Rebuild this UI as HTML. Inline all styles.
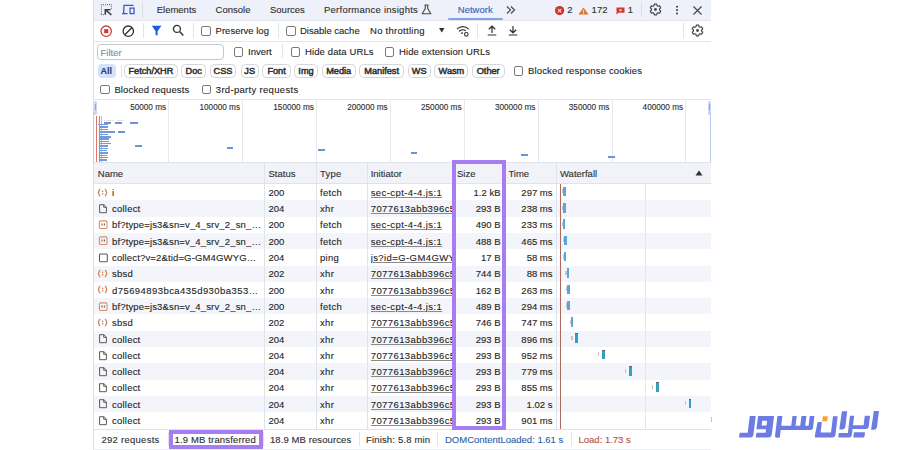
<!DOCTYPE html>
<html><head><meta charset="utf-8">
<style>
html,body{margin:0;padding:0;background:#fff;}
#c{position:relative;width:900px;height:450px;overflow:hidden;background:#fff;font-family:"Liberation Sans",sans-serif;}
.a{position:absolute;}
.t{position:absolute;font-family:"Liberation Sans",sans-serif;font-size:9.5px;line-height:12px;white-space:nowrap;color:#1f1f1f;-webkit-text-stroke:0.12px currentColor;}
.r{text-align:right;}
.u{text-decoration:underline;text-decoration-color:#8a8a8a;}
.clip{overflow:hidden;}
.row{position:absolute;left:94px;width:617px;}
.ic{position:absolute;width:11px;height:11px;}
.ic svg{display:block;}
.wfb{position:absolute;width:2.8px;height:9.5px;background:linear-gradient(90deg,#3fa88f 0,#2a9ccc 40%,#3b9fe0 100%);border-top:1px solid #4d6a78;box-sizing:border-box;}
.wfl{background:#55a7dc;border-top:none;width:2.4px;}
.wfq{position:absolute;width:1.3px;height:4.3px;background:#c4c4c4;}
.vl{position:absolute;width:1px;}
.hl{position:absolute;height:1px;}
.cb{position:absolute;width:7.5px;height:7.5px;border:1px solid #7a7a7a;border-radius:2px;background:#fff;}
.chip{position:absolute;height:12px;border:1px solid #d3d6db;border-radius:4.5px;background:#fff;}
.ct{font-weight:bold;font-size:9px;color:#303030;}
.chip{display:flex;align-items:center;justify-content:center;}
.ct2{font-family:"Liberation Sans";font-size:9.2px;font-weight:normal;-webkit-text-stroke:0.5px #303030;color:#303030;line-height:12px;white-space:nowrap;}
.ovl{font-size:8.2px;line-height:10px;color:#303030;text-align:right;}
</style></head><body><div id="c">

<!-- panel bg -->
<div class="a" style="left:93px;top:0;width:618px;height:450px;background:#fff;"></div>
<!-- tab bar -->
<div class="a" style="left:94px;top:0;width:617px;height:20px;background:#eef1f9;"></div>
<div class="hl" style="left:94px;top:19.6px;width:617px;background:#e2e5ec;"></div>
<!-- left border -->
<div class="vl" style="left:93px;top:0;height:450px;background:#dde1e8;"></div>

<!-- tab bar icons -->
<svg class="a" style="left:98px;top:2px" width="16" height="16" viewBox="0 0 16 16">
 <g fill="#555">
 <rect x="2.9" y="2.2" width="1" height="1"/><rect x="5" y="2.2" width="1" height="1"/><rect x="7" y="2.2" width="1" height="1"/><rect x="9" y="2.2" width="1" height="1"/><rect x="11" y="2.2" width="1" height="1"/><rect x="12.8" y="2.2" width="1" height="1"/>
 <rect x="12.8" y="4.2" width="1" height="1"/><rect x="12.8" y="6" width="0.9" height="0.9"/>
 <rect x="2.9" y="4.4" width="1" height="1"/><rect x="2.9" y="6.6" width="1" height="1"/><rect x="2.9" y="8.8" width="1" height="1"/><rect x="2.9" y="11" width="1" height="1"/><rect x="2.9" y="12.2" width="1" height="1"/>
 <rect x="5" y="12.2" width="1" height="1"/>
 </g>
 <path d="M7.3 12.8V7.8H12.5M7.5 8L13.4 12.9" fill="none" stroke="#3a3a3a" stroke-width="1.5"/>
</svg>
<svg class="a" style="left:121px;top:4px" width="14" height="11" viewBox="0 0 14 11">
 <path d="M2.5 1.3h10.1M3 1.3L2.6 9.6M1 9.6h5.6" fill="none" stroke="#3b5bc8" stroke-width="1.3"/>
 <rect x="9.1" y="4.1" width="3.9" height="5.5" fill="none" stroke="#3b5bc8" stroke-width="1.3"/>
</svg>
<div class="vl" style="left:142px;top:3px;height:14px;background:#d9dce3;"></div>
<div class="t" style="left:156.7px;top:4px;color:#303030">Elements</div>
<div class="t" style="left:215.6px;top:4px;color:#303030">Console</div>
<div class="t" style="left:270px;top:4px;color:#303030">Sources</div>
<div class="t" style="left:324px;top:4px;color:#303030;letter-spacing:0.24px">Performance insights</div>
<svg class="a" style="left:421px;top:4px" width="11" height="11" viewBox="0 0 11 11">
 <path d="M3.5 1h4M4.3 1v3.5L1.2 9.8h8.6L6.7 4.5V1" fill="none" stroke="#474747" stroke-width="1.1" stroke-linejoin="round"/>
</svg>
<div class="t" style="left:457.8px;top:4px;color:#3361b8">Network</div>
<div class="a" style="left:448px;top:18px;width:55px;height:2px;background:#7ea6e6;border-radius:1px"></div>
<svg class="a" style="left:506px;top:5px" width="10" height="10" viewBox="0 0 10 10">
 <path d="M1 1.5L4.5 5L1 8.5M5 1.5L8.5 5L5 8.5" fill="none" stroke="#474747" stroke-width="1.2"/>
</svg>
<!-- errors -->
<svg class="a" style="left:554px;top:6px" width="11" height="10" viewBox="0 0 11 10">
 <circle cx="5.6" cy="4.6" r="4.6" fill="#c9352c"/>
 <path d="M3.9 3L7.3 6.4M7.3 3L3.9 6.4" stroke="#f3d6d3" stroke-width="1.1"/>
</svg>
<div class="t" style="left:567.3px;top:4.3px;color:#303030">2</div>
<svg class="a" style="left:578.3px;top:7px" width="11" height="8" viewBox="0 0 11 8">
 <path d="M5.5 0.4L10.6 7.6H0.4z" fill="#e2762f"/>
 <path d="M5.5 2.8v2.6M5.5 6v0.9" stroke="#f7dcc8" stroke-width="1"/>
</svg>
<div class="t" style="left:591.6px;top:4.3px;color:#303030">172</div>
<svg class="a" style="left:615.5px;top:7px" width="9" height="9" viewBox="0 0 9 9">
 <path d="M0.5 0.6h8v5.2H2.4L0.5 7.8z" fill="#cf3a35"/>
 <rect x="3.4" y="2.2" width="2.2" height="2" fill="#f1d0cc"/>
</svg>
<div class="t" style="left:627.8px;top:4.3px;color:#303030">1</div>
<div class="vl" style="left:641px;top:3px;height:14px;background:#d9dce3;"></div>
<!-- gear -->
<svg class="a" style="left:648.8px;top:3.2px" width="13" height="13" viewBox="0 0 13 13">
 <path d="M11.73 8.20 L10.59 10.18 L9.02 9.73 L8.04 10.30 L7.64 11.88 L5.36 11.88 L4.96 10.30 L3.98 9.73 L2.41 10.18 L1.27 8.20 L2.44 7.07 L2.44 5.93 L1.27 4.80 L2.41 2.82 L3.98 3.27 L4.96 2.70 L5.36 1.12 L7.64 1.12 L8.04 2.70 L9.02 3.27 L10.59 2.82 L11.73 4.80 L10.56 5.93 L10.56 7.07Z" fill="none" stroke="#474747" stroke-width="1.2" stroke-linejoin="round"/>
 <circle cx="6.5" cy="6.5" r="1.4" fill="#474747"/>
</svg>
<svg class="a" style="left:674.8px;top:3.5px" width="4" height="12" viewBox="0 0 4 12">
 <circle cx="2" cy="2.7" r="1.05" fill="#474747"/><circle cx="2" cy="6.1" r="1.05" fill="#474747"/><circle cx="2" cy="9.5" r="1.05" fill="#474747"/>
</svg>
<svg class="a" style="left:692.5px;top:5.5px" width="9" height="9" viewBox="0 0 9 9">
 <path d="M0.5 0.5L8.5 8.5M8.5 0.5L0.5 8.5" stroke="#474747" stroke-width="1.2"/>
</svg>

<!-- toolbar row -->
<div class="hl" style="left:94px;top:41px;width:617px;background:#e3e6ed;"></div>
<svg class="a" style="left:100px;top:24.5px" width="13" height="13" viewBox="0 0 13 13">
 <circle cx="6.2" cy="6.2" r="5.2" fill="none" stroke="#c5453a" stroke-width="1.3"/>
 <rect x="4.2" y="4.2" width="4" height="4" fill="#d93025"/>
</svg>
<svg class="a" style="left:121.5px;top:24.5px" width="13" height="13" viewBox="0 0 13 13">
 <circle cx="6.3" cy="6.2" r="5.2" fill="none" stroke="#303030" stroke-width="1.3"/>
 <path d="M2.8 9.7L9.8 2.7" stroke="#303030" stroke-width="1.3"/>
</svg>
<div class="vl" style="left:142.5px;top:23px;height:15px;background:#e1e3e8;"></div>
<svg class="a" style="left:151px;top:25px" width="11" height="11" viewBox="0 0 11 11">
 <path d="M0.8 0.8h9.6L6.6 6.2V10.3H4.6V6.2z" fill="#1a5ce6"/>
</svg>
<svg class="a" style="left:172px;top:24px" width="13" height="13" viewBox="0 0 13 13">
 <circle cx="4.9" cy="4.9" r="3.5" fill="none" stroke="#303030" stroke-width="1.3"/>
 <path d="M7.5 7.5L11.4 11.5" stroke="#303030" stroke-width="1.4"/>
</svg>
<div class="vl" style="left:193px;top:23px;height:15px;background:#e1e3e8;"></div>
<div class="cb" style="left:201px;top:26.2px"></div>
<div class="t" style="left:215.6px;top:25.2px">Preserve log</div>
<div class="vl" style="left:277.8px;top:23px;height:15px;background:#e1e3e8;"></div>
<div class="cb" style="left:286px;top:26.2px"></div>
<div class="t" style="left:300px;top:25.2px">Disable cache</div>
<div class="t" style="left:370px;top:25.2px;letter-spacing:0.28px">No throttling</div>
<svg class="a" style="left:438.5px;top:28px" width="6" height="5" viewBox="0 0 6 5"><path d="M0 0h5.5L2.75 4.5z" fill="#303030"/></svg>
<svg class="a" style="left:456px;top:24.5px" width="14" height="12" viewBox="0 0 14 12">
 <path d="M1 4.2A8 8 0 0 1 12.6 4.2M3 6.4A5 5 0 0 1 9.8 5.8M5.2 8.6A2 2 0 0 1 7 8" fill="none" stroke="#303030" stroke-width="1.2"/>
 <circle cx="10.3" cy="9.3" r="1.8" fill="none" stroke="#303030" stroke-width="1.1"/>
</svg>
<div class="vl" style="left:476.7px;top:23px;height:15px;background:#e1e3e8;"></div>
<svg class="a" style="left:486.5px;top:25px" width="10" height="11" viewBox="0 0 10 11">
 <path d="M5 8V1.2M1.8 4.3L5 1.2L8.2 4.3M0.7 10h8.6" fill="none" stroke="#303030" stroke-width="1.2"/>
</svg>
<svg class="a" style="left:507.5px;top:25px" width="10" height="11" viewBox="0 0 10 11">
 <path d="M5 1v6.8M1.8 4.7L5 7.8L8.2 4.7M0.7 10h8.6" fill="none" stroke="#303030" stroke-width="1.2"/>
</svg>
<div class="vl" style="left:683px;top:23px;height:15px;background:#e1e3e8;"></div>
<svg class="a" style="left:690.8px;top:24.2px" width="13" height="13" viewBox="0 0 13 13">
 <path d="M11.73 8.20 L10.59 10.18 L9.02 9.73 L8.04 10.30 L7.64 11.88 L5.36 11.88 L4.96 10.30 L3.98 9.73 L2.41 10.18 L1.27 8.20 L2.44 7.07 L2.44 5.93 L1.27 4.80 L2.41 2.82 L3.98 3.27 L4.96 2.70 L5.36 1.12 L7.64 1.12 L8.04 2.70 L9.02 3.27 L10.59 2.82 L11.73 4.80 L10.56 5.93 L10.56 7.07Z" fill="none" stroke="#474747" stroke-width="1.2" stroke-linejoin="round"/>
 <circle cx="6.5" cy="6.5" r="1.4" fill="#474747"/>
</svg>
<!-- filter row -->
<div class="a" style="left:97px;top:44px;width:124.5px;height:13.5px;border:1px solid #c4c7cc;border-radius:4px;"></div>
<div class="t" style="left:100.5px;top:46.9px;color:#8a8a8a">Filter</div>
<div class="cb" style="left:233.5px;top:47px"></div>
<div class="t" style="left:248px;top:46.1px">Invert</div>
<div class="vl" style="left:281.5px;top:44px;height:14px;background:#e1e3e8;"></div>
<div class="cb" style="left:290.5px;top:47px"></div>
<div class="t" style="left:305px;top:46.1px;letter-spacing:0.12px">Hide data URLs</div>
<div class="cb" style="left:384.5px;top:47px"></div>
<div class="t" style="left:399px;top:46.1px;letter-spacing:0.1px">Hide extension URLs</div>

<!-- chips -->
<div class="a" style="left:97.6px;top:64.4px;width:18.6px;height:13.4px;background:#d3e3fd;border-radius:4px"></div>
<div class="t ct" style="left:100.5px;top:65.3px;color:#1f3f7a">All</div>
<div class="vl" style="left:120.5px;top:65px;height:12px;background:#e1e3e8;"></div>
<div class="chip" style="left:124.2px;top:64.4px;width:51.4px;"><span class="ct2">Fetch/XHR</span></div>
<div class="chip" style="left:181.1px;top:64.4px;width:23.3px;"><span class="ct2">Doc</span></div>
<div class="chip" style="left:209.9px;top:64.4px;width:24.3px;"><span class="ct2">CSS</span></div>
<div class="chip" style="left:240.5px;top:64.4px;width:16.4px;"><span class="ct2">JS</span></div>
<div class="chip" style="left:262.2px;top:64.4px;width:26.8px;"><span class="ct2">Font</span></div>
<div class="chip" style="left:293.8px;top:64.4px;width:22.4px;"><span class="ct2">Img</span></div>
<div class="chip" style="left:321.8px;top:64.4px;width:31.8px;"><span class="ct2">Media</span></div>
<div class="chip" style="left:359.3px;top:64.4px;width:42.7px;"><span class="ct2">Manifest</span></div>
<div class="chip" style="left:407.8px;top:64.4px;width:20.9px;"><span class="ct2">WS</span></div>
<div class="chip" style="left:434.4px;top:64.4px;width:32.0px;"><span class="ct2">Wasm</span></div>
<div class="chip" style="left:471.6px;top:64.4px;width:31.2px;"><span class="ct2">Other</span></div>
<div class="cb" style="left:513.5px;top:66px"></div>
<div class="t" style="left:528px;top:65.3px;letter-spacing:0.16px">Blocked response cookies</div>

<div class="cb" style="left:100px;top:84.9px"></div>
<div class="t" style="left:114.4px;top:83.9px;letter-spacing:0.13px">Blocked requests</div>
<div class="cb" style="left:201.5px;top:84.9px"></div>
<div class="t" style="left:215.8px;top:83.9px;letter-spacing:0.31px">3rd-party requests</div>

<!-- overview -->
<div class="hl" style="left:94px;top:99px;width:617px;background:#e3e6ed;"></div>
<div class="vl" style="left:168.3px;top:100px;height:62px;background:#e6e9f0;"></div>
<div class="t ovl" style="right:733.9px;top:103.3px">50000 ms</div>
<div class="vl" style="left:242.2px;top:100px;height:62px;background:#e6e9f0;"></div>
<div class="t ovl" style="right:660.0px;top:103.3px">100000 ms</div>
<div class="vl" style="left:316.0px;top:100px;height:62px;background:#e6e9f0;"></div>
<div class="t ovl" style="right:586.2px;top:103.3px">150000 ms</div>
<div class="vl" style="left:389.9px;top:100px;height:62px;background:#e6e9f0;"></div>
<div class="t ovl" style="right:512.3px;top:103.3px">200000 ms</div>
<div class="vl" style="left:463.7px;top:100px;height:62px;background:#e6e9f0;"></div>
<div class="t ovl" style="right:438.5px;top:103.3px">250000 ms</div>
<div class="vl" style="left:537.6px;top:100px;height:62px;background:#e6e9f0;"></div>
<div class="t ovl" style="right:364.6px;top:103.3px">300000 ms</div>
<div class="vl" style="left:611.5px;top:100px;height:62px;background:#e6e9f0;"></div>
<div class="t ovl" style="right:290.7px;top:103.3px">350000 ms</div>
<div class="vl" style="left:685.3px;top:100px;height:62px;background:#e6e9f0;"></div>
<div class="t ovl" style="right:216.9px;top:103.3px">400000 ms</div>
<div class="a" style="left:93.5px;top:100.5px;width:3.2px;height:14px;background:#c9d7f2;border-radius:1.5px"></div>
<div class="a" style="left:707.6px;top:100.5px;width:3.2px;height:14px;background:#c9d7f2;border-radius:1.5px"></div>
<div class="a" style="left:94.5px;top:104px;width:1px;height:6px;background:#8ea6d8"></div>
<div class="a" style="left:708.8px;top:104px;width:1px;height:6px;background:#8ea6d8"></div>
<div class="a" style="left:93px;top:112px;width:1px;height:50.5px;background:#b9cbee"></div>
<div class="a" style="left:710px;top:112px;width:1px;height:50.5px;background:#b9cbee"></div>
<div class="a" style="left:96px;top:115.5px;width:1px;height:46.5px;background:#d9786b"></div>
<div class="a" style="left:99px;top:115.5px;width:1px;height:46.5px;background:#d9786b"></div>
<div class="a" style="left:100.8px;top:115.5px;width:1px;height:46.5px;background:#e9b0a4"></div>
<div class="a" style="left:130.0px;top:122px;width:7.8px;height:2px;background:#6b92da"></div>
<div class="a" style="left:114.6px;top:122px;width:7.4px;height:2px;background:#6b92da"></div>
<div class="a" style="left:103.6px;top:122px;width:7.4px;height:2px;background:#6b92da"></div>
<div class="a" style="left:117.8px;top:131px;width:7.1px;height:2px;background:#6b92da"></div>
<div class="a" style="left:135.1px;top:145px;width:7.1px;height:2px;background:#6b92da"></div>
<div class="a" style="left:226.7px;top:147px;width:6.8px;height:2px;background:#6b92da"></div>
<div class="a" style="left:318.0px;top:149px;width:7.0px;height:2px;background:#6b92da"></div>
<div class="a" style="left:410.5px;top:152px;width:6.7px;height:2px;background:#6b92da"></div>
<div class="a" style="left:520.8px;top:154px;width:7.5px;height:2px;background:#6b92da"></div>
<div class="a" style="left:608.3px;top:156px;width:7.0px;height:2px;background:#6b92da"></div>
<div class="a" style="left:104px;top:119.5px;width:10px;height:1px;background:#efe6da"></div>
<div class="a" style="left:117px;top:119.5px;width:7px;height:1px;background:#efe6da"></div>
<div class="a" style="left:98.0px;top:123.9px;width:10.0px;height:1.6px;background:#7599dc"></div>
<div class="a" style="left:99.0px;top:126.2px;width:9.0px;height:1.6px;background:#7599dc"></div>
<div class="a" style="left:99.0px;top:128.7px;width:9.0px;height:1.6px;background:#7599dc"></div>
<div class="a" style="left:100.0px;top:131.4px;width:15.0px;height:1.6px;background:#7599dc"></div>
<div class="a" style="left:100.0px;top:133.7px;width:8.0px;height:1.6px;background:#7599dc"></div>
<div class="a" style="left:100.0px;top:136.0px;width:11.0px;height:1.6px;background:#7599dc"></div>
<div class="a" style="left:100.0px;top:138.2px;width:9.0px;height:1.6px;background:#7599dc"></div>
<div class="a" style="left:100.0px;top:140.5px;width:9.0px;height:1.6px;background:#7599dc"></div>
<div class="a" style="left:100.0px;top:142.8px;width:11.0px;height:1.6px;background:#7599dc"></div>
<div class="a" style="left:100.0px;top:145.2px;width:8.0px;height:1.6px;background:#7599dc"></div>
<div class="a" style="left:100.0px;top:147.5px;width:8.0px;height:1.6px;background:#7599dc"></div>
<div class="a" style="left:100.0px;top:149.8px;width:7.0px;height:1.6px;background:#7599dc"></div>
<div class="a" style="left:100.0px;top:152.2px;width:8.0px;height:1.6px;background:#7599dc"></div>
<div class="a" style="left:100.0px;top:154.5px;width:7.0px;height:1.6px;background:#7599dc"></div>
<div class="a" style="left:100.0px;top:156.8px;width:8.0px;height:1.6px;background:#7599dc"></div>
<div class="a" style="left:100.0px;top:159.2px;width:7.0px;height:1.6px;background:#7599dc"></div>


<!-- table header -->
<div class="a" style="left:94px;top:162px;width:617px;height:22px;background:#f1f3f9;"></div>
<div class="hl" style="left:94px;top:162px;width:617px;background:#e0e4ee;"></div>
<div class="hl" style="left:94px;top:183px;width:617px;background:#dde3ef;"></div>

<div class="row" style="top:184.00px;height:16.3px;background:#ffffff"></div>
<div class="row" style="top:200.30px;height:16.3px;background:#f3f5fa"></div>
<div class="row" style="top:216.60px;height:16.3px;background:#ffffff"></div>
<div class="row" style="top:232.90px;height:16.3px;background:#f3f5fa"></div>
<div class="row" style="top:249.20px;height:16.3px;background:#ffffff"></div>
<div class="row" style="top:265.50px;height:16.3px;background:#f3f5fa"></div>
<div class="row" style="top:281.80px;height:16.3px;background:#ffffff"></div>
<div class="row" style="top:298.10px;height:16.3px;background:#f3f5fa"></div>
<div class="row" style="top:314.40px;height:16.3px;background:#ffffff"></div>
<div class="row" style="top:330.70px;height:16.3px;background:#f3f5fa"></div>
<div class="row" style="top:347.00px;height:16.3px;background:#ffffff"></div>
<div class="row" style="top:363.30px;height:16.3px;background:#f3f5fa"></div>
<div class="row" style="top:379.60px;height:16.3px;background:#ffffff"></div>
<div class="row" style="top:395.90px;height:16.3px;background:#f3f5fa"></div>
<div class="row" style="top:412.20px;height:16.3px;background:#ffffff"></div>
<div class="ic" style="left:97px;top:186.50px"><svg width="11" height="11" viewBox="0 0 11 11"><path d="M3.4 2Q2.2 2.3 2.1 3.8L1.4 5.5L2.1 7.2Q2.2 8.7 3.4 9M7.8 2Q9 2.3 9.1 3.8L9.8 5.5L9.1 7.2Q9 8.7 7.8 9" fill="none" stroke="#d08453" stroke-width="1.25" stroke-linejoin="round"/><circle cx="5.6" cy="4.2" r="0.75" fill="#b4764f"/><circle cx="5.6" cy="6.8" r="0.75" fill="#b4764f"/></svg></div>
<div class="t " style="left:112px;top:186.81px;letter-spacing:0px">i</div>
<div class="t " style="left:268.5px;top:186.81px;">200</div>
<div class="t " style="left:320px;top:186.81px;letter-spacing:0.3px">fetch</div>
<div class="t u clip" style="left:370.7px;top:186.81px;width:82px;letter-spacing:0.41px">sec-cpt-4-4.js:1</div>
<div class="t r " style="right:399.5px;top:186.81px;">1.2 kB</div>
<div class="t r " style="right:347.5px;top:186.81px;">297 ms</div>
<div class="wfb wfl" style="left:563.20px;top:186.70px"></div>
<div class="wfq" style="left:562.00px;top:189.20px"></div>
<div class="ic" style="left:97px;top:202.80px"><svg width="11" height="11" viewBox="0 0 11 11"><path d="M2.6 1.7h4.3L9.4 4.1V9.7H2.6z M6.7 1.7v2.6H9.4" fill="none" stroke="#5a5a5a" stroke-width="1" stroke-linejoin="round"/></svg></div>
<div class="t " style="left:112px;top:203.11px;letter-spacing:0.22px">collect</div>
<div class="t " style="left:268.5px;top:203.11px;">204</div>
<div class="t " style="left:320px;top:203.11px;letter-spacing:0.3px">xhr</div>
<div class="t u clip" style="left:370.7px;top:203.11px;width:82px;letter-spacing:0.41px">7077613abb396c5</div>
<div class="t r " style="right:399.5px;top:203.11px;">293 B</div>
<div class="t r " style="right:347.5px;top:203.11px;">238 ms</div>
<div class="wfb wfl" style="left:563.20px;top:203.00px"></div>
<div class="wfq" style="left:562.00px;top:205.50px"></div>
<div class="ic" style="left:97px;top:219.10px"><svg width="11" height="11" viewBox="0 0 11 11"><rect x="2.4" y="1.9" width="7.6" height="7.6" rx="1.3" fill="none" stroke="#d8906a" stroke-width="1.1"/><path d="M5 4.6v1.8M7.4 4.6v1.8" stroke="#7d5a48" stroke-width="1.1"/></svg></div>
<div class="t " style="left:112px;top:219.41px;letter-spacing:0.15px">bf?type=js3&amp;sn=v_4_srv_2_sn_…</div>
<div class="t " style="left:268.5px;top:219.41px;">200</div>
<div class="t " style="left:320px;top:219.41px;letter-spacing:0.3px">fetch</div>
<div class="t u clip" style="left:370.7px;top:219.41px;width:82px;letter-spacing:0.41px">sec-cpt-4-4.js:1</div>
<div class="t r " style="right:399.5px;top:219.41px;">490 B</div>
<div class="t r " style="right:347.5px;top:219.41px;">233 ms</div>
<div class="wfb wfl" style="left:562.90px;top:219.30px"></div>
<div class="wfq" style="left:561.70px;top:221.80px"></div>
<div class="ic" style="left:97px;top:235.40px"><svg width="11" height="11" viewBox="0 0 11 11"><rect x="2.4" y="1.9" width="7.6" height="7.6" rx="1.3" fill="none" stroke="#d8906a" stroke-width="1.1"/><path d="M5 4.6v1.8M7.4 4.6v1.8" stroke="#7d5a48" stroke-width="1.1"/></svg></div>
<div class="t " style="left:112px;top:235.71px;letter-spacing:0.15px">bf?type=js3&amp;sn=v_4_srv_2_sn_…</div>
<div class="t " style="left:268.5px;top:235.71px;">200</div>
<div class="t " style="left:320px;top:235.71px;letter-spacing:0.3px">fetch</div>
<div class="t u clip" style="left:370.7px;top:235.71px;width:82px;letter-spacing:0.41px">sec-cpt-4-4.js:1</div>
<div class="t r " style="right:399.5px;top:235.71px;">488 B</div>
<div class="t r " style="right:347.5px;top:235.71px;">465 ms</div>
<div class="wfb wfl" style="left:564.20px;top:235.60px"></div>
<div class="wfq" style="left:563.00px;top:238.10px"></div>
<div class="ic" style="left:97px;top:251.70px"><svg width="11" height="11" viewBox="0 0 11 11"><rect x="2.5" y="1.9" width="7.8" height="7.8" rx="1" fill="none" stroke="#5a5a5a" stroke-width="1.05"/></svg></div>
<div class="t " style="left:112px;top:252.01px;letter-spacing:0.15px">collect?v=2&amp;tid=G-GM4GWYG…</div>
<div class="t " style="left:268.5px;top:252.01px;">204</div>
<div class="t " style="left:320px;top:252.01px;letter-spacing:0.3px">ping</div>
<div class="t u clip" style="left:370.7px;top:252.01px;width:82px;letter-spacing:0.41px">js?id=G-GM4GWYG</div>
<div class="t r " style="right:399.5px;top:252.01px;">17 B</div>
<div class="t r " style="right:347.5px;top:252.01px;">58 ms</div>
<div class="wfb wfl" style="left:563.90px;top:251.90px"></div>
<div class="wfq" style="left:562.70px;top:254.40px"></div>
<div class="ic" style="left:97px;top:268.00px"><svg width="11" height="11" viewBox="0 0 11 11"><path d="M3.4 2Q2.2 2.3 2.1 3.8L1.4 5.5L2.1 7.2Q2.2 8.7 3.4 9M7.8 2Q9 2.3 9.1 3.8L9.8 5.5L9.1 7.2Q9 8.7 7.8 9" fill="none" stroke="#d08453" stroke-width="1.25" stroke-linejoin="round"/><circle cx="5.6" cy="4.2" r="0.75" fill="#b4764f"/><circle cx="5.6" cy="6.8" r="0.75" fill="#b4764f"/></svg></div>
<div class="t " style="left:112px;top:268.31px;letter-spacing:0.2px">sbsd</div>
<div class="t " style="left:268.5px;top:268.31px;">202</div>
<div class="t " style="left:320px;top:268.31px;letter-spacing:0.3px">xhr</div>
<div class="t u clip" style="left:370.7px;top:268.31px;width:82px;letter-spacing:0.41px">7077613abb396c5</div>
<div class="t r " style="right:399.5px;top:268.31px;">744 B</div>
<div class="t r " style="right:347.5px;top:268.31px;">88 ms</div>
<div class="wfb wfl" style="left:566.60px;top:268.20px"></div>
<div class="wfq" style="left:565.40px;top:270.70px"></div>
<div class="ic" style="left:97px;top:284.30px"><svg width="11" height="11" viewBox="0 0 11 11"><path d="M3.4 2Q2.2 2.3 2.1 3.8L1.4 5.5L2.1 7.2Q2.2 8.7 3.4 9M7.8 2Q9 2.3 9.1 3.8L9.8 5.5L9.1 7.2Q9 8.7 7.8 9" fill="none" stroke="#d08453" stroke-width="1.25" stroke-linejoin="round"/><circle cx="5.6" cy="4.2" r="0.75" fill="#b4764f"/><circle cx="5.6" cy="6.8" r="0.75" fill="#b4764f"/></svg></div>
<div class="t " style="left:112px;top:284.61px;letter-spacing:0.43px">d75694893bca435d930ba353…</div>
<div class="t " style="left:268.5px;top:284.61px;">200</div>
<div class="t " style="left:320px;top:284.61px;letter-spacing:0.3px">xhr</div>
<div class="t u clip" style="left:370.7px;top:284.61px;width:82px;letter-spacing:0.41px">7077613abb396c5</div>
<div class="t r " style="right:399.5px;top:284.61px;">162 B</div>
<div class="t r " style="right:347.5px;top:284.61px;">263 ms</div>
<div class="wfb wfl" style="left:567.30px;top:284.50px"></div>
<div class="wfq" style="left:566.10px;top:287.00px"></div>
<div class="ic" style="left:97px;top:300.60px"><svg width="11" height="11" viewBox="0 0 11 11"><rect x="2.4" y="1.9" width="7.6" height="7.6" rx="1.3" fill="none" stroke="#d8906a" stroke-width="1.1"/><path d="M5 4.6v1.8M7.4 4.6v1.8" stroke="#7d5a48" stroke-width="1.1"/></svg></div>
<div class="t " style="left:112px;top:300.91px;letter-spacing:0.15px">bf?type=js3&amp;sn=v_4_srv_2_sn_…</div>
<div class="t " style="left:268.5px;top:300.91px;">200</div>
<div class="t " style="left:320px;top:300.91px;letter-spacing:0.3px">fetch</div>
<div class="t u clip" style="left:370.7px;top:300.91px;width:82px;letter-spacing:0.41px">sec-cpt-4-4.js:1</div>
<div class="t r " style="right:399.5px;top:300.91px;">489 B</div>
<div class="t r " style="right:347.5px;top:300.91px;">294 ms</div>
<div class="wfb wfl" style="left:567.30px;top:300.80px"></div>
<div class="wfq" style="left:566.10px;top:303.30px"></div>
<div class="ic" style="left:97px;top:316.90px"><svg width="11" height="11" viewBox="0 0 11 11"><path d="M3.4 2Q2.2 2.3 2.1 3.8L1.4 5.5L2.1 7.2Q2.2 8.7 3.4 9M7.8 2Q9 2.3 9.1 3.8L9.8 5.5L9.1 7.2Q9 8.7 7.8 9" fill="none" stroke="#d08453" stroke-width="1.25" stroke-linejoin="round"/><circle cx="5.6" cy="4.2" r="0.75" fill="#b4764f"/><circle cx="5.6" cy="6.8" r="0.75" fill="#b4764f"/></svg></div>
<div class="t " style="left:112px;top:317.21px;letter-spacing:0.2px">sbsd</div>
<div class="t " style="left:268.5px;top:317.21px;">202</div>
<div class="t " style="left:320px;top:317.21px;letter-spacing:0.3px">xhr</div>
<div class="t u clip" style="left:370.7px;top:317.21px;width:82px;letter-spacing:0.41px">7077613abb396c5</div>
<div class="t r " style="right:399.5px;top:317.21px;">746 B</div>
<div class="t r " style="right:347.5px;top:317.21px;">747 ms</div>
<div class="wfb wfl" style="left:571.00px;top:317.10px"></div>
<div class="wfq" style="left:569.80px;top:319.60px"></div>
<div class="ic" style="left:97px;top:333.20px"><svg width="11" height="11" viewBox="0 0 11 11"><path d="M2.6 1.7h4.3L9.4 4.1V9.7H2.6z M6.7 1.7v2.6H9.4" fill="none" stroke="#5a5a5a" stroke-width="1" stroke-linejoin="round"/></svg></div>
<div class="t " style="left:112px;top:333.51px;letter-spacing:0.22px">collect</div>
<div class="t " style="left:268.5px;top:333.51px;">204</div>
<div class="t " style="left:320px;top:333.51px;letter-spacing:0.3px">xhr</div>
<div class="t u clip" style="left:370.7px;top:333.51px;width:82px;letter-spacing:0.41px">7077613abb396c5</div>
<div class="t r " style="right:399.5px;top:333.51px;">293 B</div>
<div class="t r " style="right:347.5px;top:333.51px;">896 ms</div>
<div class="wfb" style="left:575.40px;top:333.40px"></div>
<div class="wfq" style="left:571.40px;top:335.90px"></div>
<div class="ic" style="left:97px;top:349.50px"><svg width="11" height="11" viewBox="0 0 11 11"><path d="M2.6 1.7h4.3L9.4 4.1V9.7H2.6z M6.7 1.7v2.6H9.4" fill="none" stroke="#5a5a5a" stroke-width="1" stroke-linejoin="round"/></svg></div>
<div class="t " style="left:112px;top:349.81px;letter-spacing:0.22px">collect</div>
<div class="t " style="left:268.5px;top:349.81px;">204</div>
<div class="t " style="left:320px;top:349.81px;letter-spacing:0.3px">xhr</div>
<div class="t u clip" style="left:370.7px;top:349.81px;width:82px;letter-spacing:0.41px">7077613abb396c5</div>
<div class="t r " style="right:399.5px;top:349.81px;">293 B</div>
<div class="t r " style="right:347.5px;top:349.81px;">952 ms</div>
<div class="wfb" style="left:602.20px;top:349.70px"></div>
<div class="wfq" style="left:598.20px;top:352.20px"></div>
<div class="ic" style="left:97px;top:365.80px"><svg width="11" height="11" viewBox="0 0 11 11"><path d="M2.6 1.7h4.3L9.4 4.1V9.7H2.6z M6.7 1.7v2.6H9.4" fill="none" stroke="#5a5a5a" stroke-width="1" stroke-linejoin="round"/></svg></div>
<div class="t " style="left:112px;top:366.11px;letter-spacing:0.22px">collect</div>
<div class="t " style="left:268.5px;top:366.11px;">204</div>
<div class="t " style="left:320px;top:366.11px;letter-spacing:0.3px">xhr</div>
<div class="t u clip" style="left:370.7px;top:366.11px;width:82px;letter-spacing:0.41px">7077613abb396c5</div>
<div class="t r " style="right:399.5px;top:366.11px;">293 B</div>
<div class="t r " style="right:347.5px;top:366.11px;">779 ms</div>
<div class="wfb" style="left:629.00px;top:366.00px"></div>
<div class="wfq" style="left:625.00px;top:368.50px"></div>
<div class="ic" style="left:97px;top:382.10px"><svg width="11" height="11" viewBox="0 0 11 11"><path d="M2.6 1.7h4.3L9.4 4.1V9.7H2.6z M6.7 1.7v2.6H9.4" fill="none" stroke="#5a5a5a" stroke-width="1" stroke-linejoin="round"/></svg></div>
<div class="t " style="left:112px;top:382.41px;letter-spacing:0.22px">collect</div>
<div class="t " style="left:268.5px;top:382.41px;">204</div>
<div class="t " style="left:320px;top:382.41px;letter-spacing:0.3px">xhr</div>
<div class="t u clip" style="left:370.7px;top:382.41px;width:82px;letter-spacing:0.41px">7077613abb396c5</div>
<div class="t r " style="right:399.5px;top:382.41px;">293 B</div>
<div class="t r " style="right:347.5px;top:382.41px;">855 ms</div>
<div class="wfb" style="left:655.80px;top:382.30px"></div>
<div class="wfq" style="left:651.80px;top:384.80px"></div>
<div class="ic" style="left:97px;top:398.40px"><svg width="11" height="11" viewBox="0 0 11 11"><path d="M2.6 1.7h4.3L9.4 4.1V9.7H2.6z M6.7 1.7v2.6H9.4" fill="none" stroke="#5a5a5a" stroke-width="1" stroke-linejoin="round"/></svg></div>
<div class="t " style="left:112px;top:398.71px;letter-spacing:0.22px">collect</div>
<div class="t " style="left:268.5px;top:398.71px;">204</div>
<div class="t " style="left:320px;top:398.71px;letter-spacing:0.3px">xhr</div>
<div class="t u clip" style="left:370.7px;top:398.71px;width:82px;letter-spacing:0.41px">7077613abb396c5</div>
<div class="t r " style="right:399.5px;top:398.71px;">293 B</div>
<div class="t r " style="right:347.5px;top:398.71px;">1.02 s</div>
<div class="wfb" style="left:688.50px;top:398.60px"></div>
<div class="wfq" style="left:684.50px;top:401.10px"></div>
<div class="ic" style="left:97px;top:414.70px"><svg width="11" height="11" viewBox="0 0 11 11"><path d="M2.6 1.7h4.3L9.4 4.1V9.7H2.6z M6.7 1.7v2.6H9.4" fill="none" stroke="#5a5a5a" stroke-width="1" stroke-linejoin="round"/></svg></div>
<div class="t " style="left:112px;top:415.01px;letter-spacing:0.22px">collect</div>
<div class="t " style="left:268.5px;top:415.01px;">204</div>
<div class="t " style="left:320px;top:415.01px;letter-spacing:0.3px">xhr</div>
<div class="t u clip" style="left:370.7px;top:415.01px;width:82px;letter-spacing:0.41px">7077613abb396c5</div>
<div class="t r " style="right:399.5px;top:415.01px;">293 B</div>
<div class="t r " style="right:347.5px;top:415.01px;">901 ms</div>
<div class="wfq" style="left:710.80px;top:417.40px"></div>

<!-- column lines -->
<div class="vl" style="left:264px;top:162px;height:267px;background:#e0e3ea;"></div>
<div class="vl" style="left:316px;top:162px;height:267px;background:#e0e3ea;"></div>
<div class="vl" style="left:367px;top:162px;height:267px;background:#e0e3ea;"></div>
<div class="vl" style="left:453px;top:162px;height:267px;background:#e0e3ea;"></div>
<div class="vl" style="left:503px;top:162px;height:267px;background:#e0e3ea;"></div>
<div class="vl" style="left:555.5px;top:162px;height:267px;background:#e0e3ea;"></div>
<div class="vl" style="left:645px;top:184px;height:245px;background:#e3e6ee;"></div>
<div class="vl" style="left:560px;top:184px;height:245px;background:#ab6a5e;"></div>

<div class="t" style="left:97.8px;top:167.8px;color:#303030">Name</div>
<div class="t" style="left:268.5px;top:167.8px;color:#303030">Status</div>
<div class="t" style="left:320px;top:167.8px;color:#303030;letter-spacing:0.25px">Type</div>
<div class="t" style="left:370.7px;top:167.8px;color:#303030">Initiator</div>
<div class="t" style="left:457px;top:167.8px;color:#303030">Size</div>
<div class="t" style="left:508.4px;top:167.8px;color:#303030">Time</div>
<div class="t" style="left:560px;top:167.8px;color:#303030">Waterfall</div>
<svg class="a" style="left:695px;top:170px" width="8" height="6" viewBox="0 0 8 6"><path d="M0.5 5.5L4 0.5L7.5 5.5z" fill="#303030"/></svg>

<!-- status bar -->
<div class="a" style="left:94px;top:429px;width:617px;height:21px;background:#fff;"></div>
<div class="hl" style="left:94px;top:428.5px;width:617px;background:#dfe3ec;"></div>
<div class="hl" style="left:94px;top:449px;width:617px;background:#eef0f4;"></div>
<div class="t" style="left:101.5px;top:434px;color:#303030;letter-spacing:0.26px">292 requests</div>
<div class="vl" style="left:168px;top:432px;height:14px;background:#e1e3e8;"></div>
<div class="t" style="left:174.5px;top:434px;color:#303030;letter-spacing:0.15px">1.9 MB transferred</div>
<div class="vl" style="left:263px;top:432px;height:14px;background:#e1e3e8;"></div>
<div class="t" style="left:270px;top:434px;color:#303030;letter-spacing:0.09px">18.9 MB resources</div>
<div class="vl" style="left:359px;top:432px;height:14px;background:#e1e3e8;"></div>
<div class="t" style="left:366px;top:434px;color:#303030;letter-spacing:0.16px">Finish: 5.8 min</div>
<div class="vl" style="left:436.7px;top:432px;height:14px;background:#e1e3e8;"></div>
<div class="t" style="left:445px;top:434px;color:#2d5fa8">DOMContentLoaded: 1.61 s</div>
<div class="vl" style="left:571px;top:432px;height:14px;background:#e1e3e8;"></div>
<div class="t" style="left:578.5px;top:434px;color:#b5524a">Load: 1.73 s</div>

<!-- purple highlight boxes -->
<div class="a" style="left:452px;top:160px;width:46px;height:262px;border:4px solid #a97df2;"></div>
<div class="a" style="left:169px;top:430px;width:86px;height:11px;border:4px solid #a97df2;"></div>

<svg class="a" style="left:730px;top:405px" width="160" height="40" viewBox="0 0 160 40">
<g transform="translate(0,32.5) skewX(-7) translate(0,-32.5)">
<g fill="#6d7be4"><path d="M17.10 11.40 Q17.10 11.00 17.50 11.00 L22.70 11.00 Q23.10 11.00 23.10 11.40 L23.10 29.60 Q23.10 32.60 20.10 32.60 L9.40 32.60 Q9.00 32.60 9.00 32.20 L9.00 28.20 Q9.00 27.80 9.40 27.80 L16.70 27.80 Q17.10 27.80 17.10 27.40Z" fill-rule="evenodd"/><path d="M25.40 11.40 Q25.40 11.00 25.80 11.00 L41.00 11.00 Q41.40 11.00 41.40 11.40 L41.40 29.60 Q41.40 32.60 38.40 32.60 L26.20 32.60 Q25.80 32.60 25.80 32.20 L25.80 28.20 Q25.80 27.80 26.20 27.80 L35.00 27.80 L35.00 24.20 L25.80 24.20 Q25.40 24.20 25.40 23.80Z M30.20 15.80 L35.00 15.80 L35.00 20.60 L30.20 20.60Z" fill-rule="evenodd"/><path d="M44.80 11.40 Q44.80 11.00 45.20 11.00 L49.40 11.00 Q49.80 11.00 49.80 11.40 L49.80 20.70 L59.80 20.70 L59.80 11.40 Q59.80 11.00 60.20 11.00 L63.70 11.00 Q64.10 11.00 64.10 11.40 L64.10 20.70 L68.80 20.70 L68.80 11.40 Q68.80 11.00 69.20 11.00 L73.40 11.00 Q73.80 11.00 73.80 11.40 L73.80 20.70 L77.10 20.70 L77.10 11.40 Q77.10 11.00 77.50 11.00 L81.40 11.00 Q81.80 11.00 81.80 11.40 L81.80 23.00 Q81.80 25.00 79.80 25.00 L49.80 25.00 L49.80 31.70 Q49.80 32.70 48.80 32.70 L46.80 32.70 Q44.80 32.70 44.80 30.70Z" fill-rule="evenodd"/><path d="M85.67 17.30 Q85.70 16.90 86.10 16.90 L89.60 16.90 Q90.00 16.90 90.00 17.30 L90.00 27.60 L100.40 27.60 L100.40 11.60 Q100.40 11.20 100.80 11.20 L104.70 11.20 Q105.10 11.20 105.10 11.60 L105.10 29.50 Q105.10 32.50 102.10 32.50 L86.00 32.50 Q84.50 32.50 84.62 31.00Z" fill-rule="evenodd"/><path d="M108.69 6.60 Q108.70 6.20 109.10 6.20 L113.60 6.20 Q114.00 6.20 114.00 6.60 L114.00 20.90 Q114.00 24.40 111.15 24.40 L108.70 24.40 Q108.30 24.40 108.31 24.00Z" fill-rule="evenodd"/><path d="M117.30 11.20 Q117.30 10.80 117.70 10.80 L121.10 10.80 Q121.50 10.80 121.50 11.20 L121.50 20.30 L132.10 20.30 L132.10 11.20 Q132.10 10.80 132.50 10.80 L137.00 10.80 Q137.40 10.80 137.40 11.20 L137.40 21.50 Q137.40 24.00 134.90 24.00 L121.50 24.00 L121.50 29.90 Q121.50 32.40 119.00 32.40 L108.70 32.40 Q108.30 32.40 108.30 32.00 L108.30 28.30 Q108.30 27.90 108.70 27.90 L117.30 27.90Z" fill-rule="evenodd"/><path d="M123.30 27.60 Q123.30 27.20 123.70 27.20 L134.00 27.20 Q134.40 27.20 134.40 27.60 L134.40 30.90 Q134.40 32.40 132.90 32.40 L123.70 32.40 Q123.30 32.40 123.30 32.00Z" fill-rule="evenodd"/><path d="M140.59 6.30 Q140.60 5.90 141.00 5.90 L145.30 5.90 Q145.70 5.90 145.70 6.30 L145.70 21.30 Q145.70 24.80 142.90 24.80 L140.50 24.80 Q140.10 24.80 140.11 24.40Z" fill-rule="evenodd"/></g><rect x="90.2" y="11.2" width="5" height="5" rx="0.4" fill="#f6a23e"/>
</g></svg>
</div></body></html>
